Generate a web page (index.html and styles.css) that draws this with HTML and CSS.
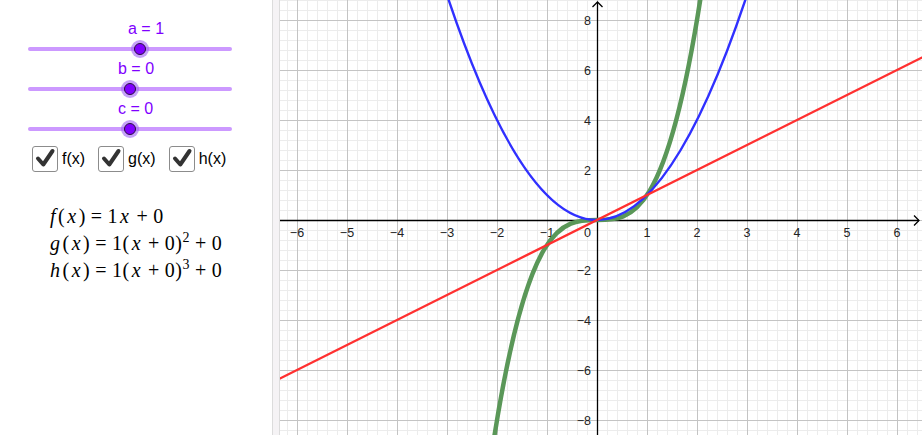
FILE: index.html
```html
<!DOCTYPE html>
<html>
<head>
<meta charset="utf-8">
<link rel="stylesheet" href="styles.css">
</head>
<body>
<div class="app">
  <div class="panel">
    <div class="slider" style="--pos: 112px">
      <div class="slider-label">a = 1</div>
      <div class="track"><div class="bar"></div><div class="knob"><div class="dot"></div></div></div>
    </div>
    <div class="slider" style="--pos: 102px">
      <div class="slider-label">b = 0</div>
      <div class="track"><div class="bar"></div><div class="knob"><div class="dot"></div></div></div>
    </div>
    <div class="slider" style="--pos: 102px">
      <div class="slider-label">c = 0</div>
      <div class="track"><div class="bar"></div><div class="knob"><div class="dot"></div></div></div>
    </div>
    <div class="checks">
      <div class="check"><span class="box"><svg viewBox="0 0 25 26" width="25" height="26"><path d="M6 13.5 L11.3 19.5 L20.5 6" /></svg></span><span class="clabel">f(x)</span></div>
      <div class="check"><span class="box"><svg viewBox="0 0 25 26" width="25" height="26"><path d="M6 13.5 L11.3 19.5 L20.5 6" /></svg></span><span class="clabel">g(x)</span></div>
      <div class="check"><span class="box"><svg viewBox="0 0 25 26" width="25" height="26"><path d="M6 13.5 L11.3 19.5 L20.5 6" /></svg></span><span class="clabel">h(x)</span></div>
    </div>
    <div class="formulas">
      <div class="fline"><span class="mi">f</span>(<span class="mi">x</span>)<span class="rel">=</span>1<span class="mi">x</span><span class="bin">+</span>0</div>
      <div class="fline"><span class="mi">g</span>(<span class="mi">x</span>)<span class="rel">=</span>1(<span class="mi">x</span><span class="bin">+</span>0)<sup>2</sup><span class="bin">+</span>0</div>
      <div class="fline"><span class="mi">h</span>(<span class="mi">x</span>)<span class="rel">=</span>1(<span class="mi">x</span><span class="bin">+</span>0)<sup>3</sup><span class="bin">+</span>0</div>
    </div>
  </div>
  <div class="divider"></div>
  <div class="graph">
    <svg width="642" height="435" viewBox="0 0 642 435">
      <defs>
        <pattern id="minor" patternUnits="userSpaceOnUse" x="7" y="0" width="10" height="10">
          <rect x="0" y="0" width="1" height="10" fill="#ececec"/>
          <rect x="0" y="0" width="10" height="1" fill="#ececec"/>
        </pattern>
        <pattern id="major" patternUnits="userSpaceOnUse" x="17" y="20" width="50" height="50">
          <rect x="0" y="0" width="1" height="50" fill="#c4c4c4"/>
          <rect x="0" y="0" width="50" height="1" fill="#c4c4c4"/>
        </pattern>
      </defs>
      <rect width="642" height="435" fill="#fff"/>
      <rect width="642" height="435" fill="url(#minor)"/>
      <rect width="642" height="435" fill="url(#major)"/>
      <g stroke="#000" stroke-width="1.3" fill="none">
        <line x1="0" y1="220.5" x2="639" y2="220.5"/>
        <line x1="317.5" y1="435" x2="317.5" y2="2"/>
        <path d="M634 215.5 L639 220.5 L634 225.5"/>
        <path d="M312.5 7 L317.5 2 L322.5 7"/>
      </g>
      <g class="ax" text-anchor="middle">
        <text x="17" y="236.5">−6</text>
        <text x="67" y="236.5">−5</text>
        <text x="117" y="236.5">−4</text>
        <text x="167" y="236.5">−3</text>
        <text x="217" y="236.5">−2</text>
        <text x="267" y="236.5">−1</text>
        <text x="367" y="236.5">1</text>
        <text x="417" y="236.5">2</text>
        <text x="467" y="236.5">3</text>
        <text x="517" y="236.5">4</text>
        <text x="567" y="236.5">5</text>
        <text x="617" y="236.5">6</text>
      </g>
      <g class="ax" text-anchor="end">
        <text x="311" y="236.5">0</text>
        <text x="311" y="24.5">8</text>
        <text x="311" y="74.5">6</text>
        <text x="311" y="124.5">4</text>
        <text x="311" y="174.5">2</text>
        <text x="311" y="274.5">−2</text>
        <text x="311" y="324.5">−4</text>
        <text x="311" y="374.5">−6</text>
        <text x="311" y="424.5">−8</text>
      </g>
      <g fill="none" stroke-linecap="round">
        <path d="M212 451.5 C282 -11.5 352 451.5 422 -11.5" stroke="#5a9758" stroke-width="4.5"/>
        <path d="M167 -5 Q317 445 467 -5" stroke="#3030ff" stroke-width="2.4"/>
        <path d="M-8 382.5 L650 53.5" stroke="#ff3030" stroke-width="2.4"/>
      </g>
    </svg>
  </div>
</div>
</body>
</html>
```

FILE: styles.css
```css
html, body {
  margin: 0;
  padding: 0;
  background: #fff;
}

.app {
  display: flex;
  width: 922px;
  height: 435px;
  overflow: hidden;
}

.panel {
  width: 272px;
  flex: none;
  padding-top: 19px;
  box-sizing: border-box;
  font-family: "Liberation Sans", Arial, sans-serif;
}

.divider {
  width: 8px;
  flex: none;
  box-sizing: border-box;
  background: #f5f3f5;
  border-left: 1px solid #dcdcdc;
  border-right: 1px solid #dcdcdc;
}

.graph {
  flex: none;
  width: 642px;
  height: 435px;
}

.graph svg {
  display: block;
}

.ax {
  font-family: "Liberation Sans", Arial, sans-serif;
  font-size: 12.5px;
  fill: #222;
}

.slider {
  height: 40px;
}

.slider-label {
  height: 20px;
  line-height: 20px;
  font-size: 16px;
  color: #7f00ff;
  padding-left: calc(var(--pos) + 16px);
}

.track {
  position: relative;
  margin-left: 28px;
  width: 204px;
  height: 20px;
}

.bar {
  position: relative;
  top: 8px;
  height: 4px;
  border-radius: 2px;
  background: #cc99ff;
}

.knob {
  position: absolute;
  left: calc(var(--pos) - 9px);
  top: 1px;
  width: 18px;
  height: 18px;
  border-radius: 50%;
  background: rgba(160, 100, 245, 0.6);
  display: flex;
  align-items: center;
  justify-content: center;
}

.dot {
  width: 10px;
  height: 10px;
  border-radius: 50%;
  background: #7f00ff;
  border: 1px solid #2a1040;
}

.checks {
  display: flex;
  gap: 13px;
  margin-left: 32px;
  margin-top: 6px;
  height: 27px;
  align-items: center;
}

.check {
  display: flex;
  align-items: center;
  gap: 4px;
}

.box {
  display: block;
  width: 26px;
  height: 26px;
  box-sizing: border-box;
  border: 1.5px solid #8c8c8c;
  border-radius: 3px;
  background: #fff;
  position: relative;
}

.box svg {
  position: absolute;
  left: -1px;
  top: -1.5px;
}

.box path {
  fill: none;
  stroke: #333;
  stroke-width: 4;
  stroke-linecap: round;
  stroke-linejoin: round;
}

.clabel {
  font-size: 16px;
  color: #000;
}

.formulas {
  margin-top: 31px;
  margin-left: 48px;
  font-family: "Liberation Serif", "Times New Roman", serif;
  font-size: 20px;
  letter-spacing: 0.5px;
  color: #000;
}

.fline {
  height: 27px;
  line-height: 27px;
  white-space: nowrap;
}

.mi {
  font-style: italic;
  padding: 0 2px;
}

.rel {
  margin: 0 5px;
}

.bin {
  margin: 0 5px;
}

sup {
  font-size: 14px;
  line-height: 0;
  vertical-align: 8px;
}
```
